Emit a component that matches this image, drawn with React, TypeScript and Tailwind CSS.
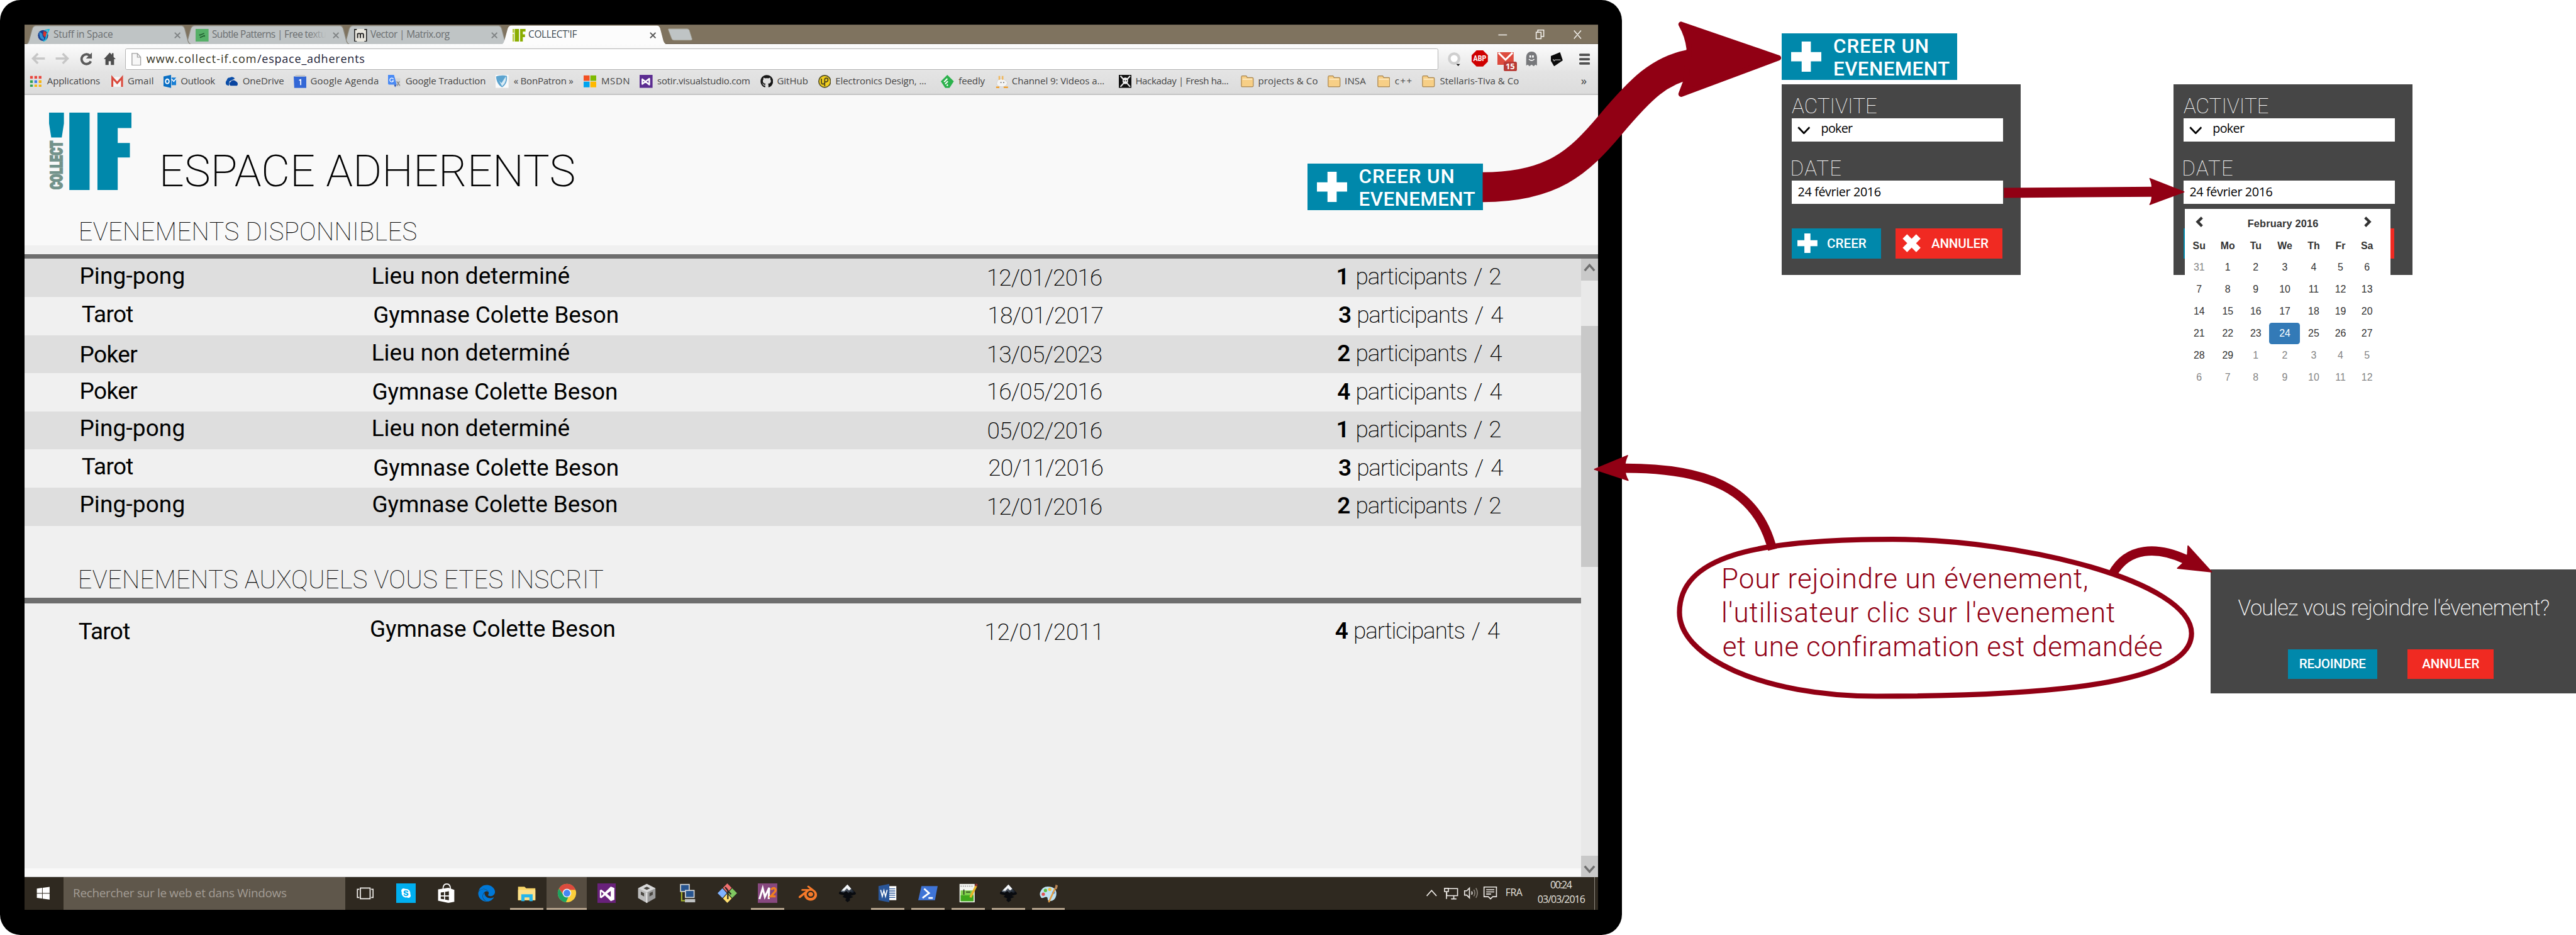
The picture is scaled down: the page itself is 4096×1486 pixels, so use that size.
import React, { useLayoutEffect, useRef, useState } from "react";
import { FaEdge, FaGithub, FaSkype, FaWindows } from "react-icons/fa";
import { DiVisualstudio } from "react-icons/di";
import { SiBlender } from "react-icons/si";

/* One line of text whose ink spans exactly `w` pixels; the tracking is measured at run time. */
function Fit({ w, className = "", children }: { w: number; className?: string; children: string }) {
  const ref = useRef<HTMLDivElement>(null);
  const [fit, setFit] = useState({ spacing: 0, shift: 0 });
  useLayoutEffect(() => {
    const ctx = document.createElement("canvas").getContext("2d");
    if (!ref.current || !ctx) return;
    const cs = getComputedStyle(ref.current);
    ctx.font = `${cs.fontWeight} ${cs.fontSize} ${cs.fontFamily}`;
    const m = ctx.measureText(children);
    const ink = m.actualBoundingBoxLeft + m.actualBoundingBoxRight;
    const n = children.length - 1;
    setFit({ spacing: n > 0 ? (w - ink) / n : 0, shift: m.actualBoundingBoxLeft });
  }, [w, children]);
  return (
    <div
      ref={ref}
      className={"shrink-0 whitespace-pre leading-none " + className}
      style={{ width: w, letterSpacing: fit.spacing, textIndent: fit.shift }}
    >
      {children}
    </div>
  );
}

/* ---------- browser chrome ---------- */

const ifGlyph = "M4 0h8v24H4zM14 0h10v5h-5v5h4v5h-4v9h-5z";

function TabIcon({ kind }: { kind: string }) {
  if (kind === "space")
    return (
      <svg viewBox="0 0 24 24" className="h-[24px] w-[24px]">
        <ellipse cx="11" cy="12" rx="9.500" ry="10" fill="#1c3f8f" />
        <path d="M4 6c4 0 6 3 6 6s4 4 3 8c-6 0-9-5-9-14z" fill="#2f8fd0" />
        <path d="M12 4c5 1 7 4 6 8l-4 3-3-4z" fill="#d8342b" />
        <path d="M14 3l8-2-4 9-2 10-5 3" fill="none" stroke="#23b6d8" strokeWidth="2.400" />
      </svg>
    );
  if (kind === "subtle")
    return (
      <svg viewBox="0 0 24 24" className="h-[24px] w-[24px]">
        <path d="M0 0h24v24H0z" fill="#56b068" />
        <path d="M7 12l9-4M8 16l9-4M7 12l1-2M17 12l-1 2" stroke="#1f5c2f" strokeWidth="1.800" fill="none" />
      </svg>
    );
  if (kind === "matrix")
    return (
      <svg viewBox="0 0 24 24" className="h-[24px] w-[24px]">
        <path d="M1 0h22v24H1z" fill="#e9e7de" />
        <path d="M5 1H1v22h4M19 1h4v22h-4" stroke="#222" strokeWidth="1.800" fill="none" />
        <path d="M6.500 17V8M6.500 10.500c0-3 5.200-3 5.200 0V17M11.700 10.500c0-3 5.600-3 5.600 0V17" stroke="#222" strokeWidth="2.200" fill="none" />
      </svg>
    );
  return (
    <svg viewBox="0 0 24 24" className="h-[24px] w-[24px]">
      <path d={ifGlyph} fill="#8aad00" />
      <path d="M0 0h3v7H0zM0 9h2.500v15H0z" fill="#b4c832" />
    </svg>
  );
}

function Tab({ kind, title, w, active, z }: { kind: string; title: string; w: number; active?: boolean; z: string }) {
  return (
    <div className={"relative -ml-[14px] flex h-[36px] w-[307px] shrink-0 items-start " + z}>
      <svg viewBox="0 0 307 36" className="absolute inset-0 h-[36px] w-[307px]">
        <path
          d="M0 36Q4 35 6 28L12 6Q14 1 19 1H288Q292 1 294 6L300 29Q302 35 307 36Z"
          fill={active ? "#fcfcfc" : "#bfc4c5"}
          stroke={active ? "none" : "#8b877b"}
          strokeWidth="1.500"
        />
      </svg>
      <div className="relative ml-[21px] mt-[7px]">
        <TabIcon kind={kind} />
      </div>
      <div className="relative ml-[6px] mt-[9px] w-[212px]">
        <Fit w={w} className={active ? "text-[18px] text-[#3c4a52]" : "text-[18px] text-[#6b6e70]"}>{title}</Fit>
        {w > 200 && <div className="absolute right-0 top-0 h-[22px] w-[34px] bg-linear-to-r from-transparent to-[#bfc4c5]" />}
      </div>
      <svg viewBox="0 0 12 12" className="relative ml-[11px] mt-[13px] h-[12px] w-[12px]">
        <path d="M1 1l10 10M11 1L1 11" stroke={active ? "#555" : "#7f8384"} strokeWidth="2.200" />
      </svg>
    </div>
  );
}

function TabStrip() {
  return (
    <div className="flex h-[37px] items-end bg-[#7f735f] pl-[17px] shadow-[inset_0_1px_0_#5d5345,inset_0_-1px_0_#5d5345]">
      <Tab kind="space" title="Stuff in Space" w={110} z="z-30" />
      <Tab kind="subtle" title="Subtle Patterns | Free textu" w={211} z="z-20" />
      <Tab kind="matrix" title="Vector | Matrix.org" w={147} z="z-10" />
      <Tab kind="if" title="COLLECT'IF" w={89} active z="z-40" />
      <svg viewBox="0 0 48 24" className="mb-[6px] h-[24px] w-[48px]">
        <path d="M3 1H37Q40 1 41 4L46 20Q46 22 44 22H12Q9 22 8 19L2 3Q1 1 3 1Z" fill="#bfc4c5" stroke="#9c9788" />
      </svg>
      <svg viewBox="0 0 160 20" className="mb-[9px] ml-auto mr-[28px] h-[20px] w-[160px]" fill="none" stroke="#f4f2ee" strokeWidth="1.800">
        <path d="M4 11h16M74 6h9v12h-9zM77 6V2h11v12h-4M144 3l13 15M157 3l-13 15" />
      </svg>
    </div>
  );
}

function Toolbar() {
  return (
    <div className="flex h-[48px] items-start bg-linear-to-b from-[#fcfcfc] to-[#e6e6e6]">
      <svg viewBox="0 0 160 30" className="ml-[12px] mt-[12px] h-[30px] w-[160px]" fill="none">
        <path d="M26 14H5M13 5L4 14l9 9" stroke="#c6c6c6" strokeWidth="4" />
        <path d="M46 14h21M59 5l9 9-9 9" stroke="#c6c6c6" strokeWidth="4" />
        <path d="M109 8.500A9 9 0 1 0 111 19" stroke="#5b5b5b" strokeWidth="4.400" />
        <path d="M113 3v11h-11z" fill="#5b5b5b" />
        <path d="M146 3l-11 12h3v11h6v-7h4v7h6V15h3l-4-4V4h-3v3z" fill="#4e4e4e" />
      </svg>
      <div className="ml-[14.500px] mt-[7px] flex h-[40px] w-[2428px] items-start rounded-[3px] border-[1.500px] border-[#b4b4b4] bg-white">
        <svg viewBox="0 0 18 24" className="ml-[11px] mt-[7px] h-[24px] w-[18px]">
          <path d="M1 1h10l6 7v15H1zM11 1v7h6" fill="#f7f7f7" stroke="#a2a2a2" strokeWidth="1.600" />
        </svg>
        <Fit w={202} className="ml-[9px] mt-[7.500px] text-[21px] text-[#333322]">www.collect-if.com</Fit>
        <Fit w={199} className="ml-[3px] mt-[7.500px] text-[21px] text-[#1b1b35]">/espace_adherents</Fit>
      </div>
      <svg viewBox="0 0 26 30" className="ml-[17px] mt-[12px] h-[30px] w-[26px]">
        <circle cx="13" cy="14" r="9" fill="#fff" stroke="#cfcfcf" strokeWidth="5" />
        <path d="M17 24h7l-3.500 4z" fill="#111" />
      </svg>
      <svg viewBox="0 0 30 30" className="ml-[19px] mt-[11px] h-[30px] w-[30px]">
        <path d="M9 0h12l9 9v12l-9 9H9l-9-9V9z" fill="#cf0000" />
        <text x="15" y="20" textAnchor="middle" textLength="24" lengthAdjust="spacingAndGlyphs" fill="#fff" fontSize="14" fontWeight="700" fontFamily="Roboto">ABP</text>
      </svg>
      <div className="relative ml-[18px] mt-[14px]">
        <svg viewBox="0 0 30 24" className="h-[24px] w-[30px]">
          <path d="M0 0h30v24H0z" fill="#dd4b3e" />
          <path d="M2 1l13 13L28 1" fill="none" stroke="#fff" strokeWidth="3.400" />
        </svg>
        <div className="absolute left-[11px] top-[18px] flex h-[17px] w-[25px] items-center justify-center rounded-[3px] bg-[#b83b36] text-[15px] font-bold leading-none text-white">15</div>
      </div>
      <svg viewBox="0 0 24 28" className="ml-[21px] mt-[13px] h-[28px] w-[24px]">
        <path d="M2 26V10Q3 0 12 0t10 10v16l-3-2-3 3-4-3-4 3-3-3z" fill="#77787b" />
        <path d="M8 7h3v4H8zM13 7h3v4h-3z" fill="#fff" />
        <path d="M7 14q5 5 10 0" fill="none" stroke="#fff" strokeWidth="1.800" />
      </svg>
      <svg viewBox="0 0 22 26" className="ml-[24px] mt-[14px] h-[26px] w-[22px]">
        <path d="M0 7L17 0l5 15L6 26 0 16z" fill="#0b0b0b" />
        <path d="M4 13l2 3 2-2h10" stroke="#bbb" strokeWidth="1.400" fill="none" />
      </svg>
      <svg viewBox="0 0 20 22" className="ml-[30px] mt-[17px] h-[22px] w-[20px]" stroke="#505050" strokeWidth="4.400" strokeLinecap="round">
        <path d="M2 2.500h16M2 10.500h16M2 18.500h16" />
      </svg>
    </div>
  );
}

const bookmarks: { label: string; icon: string; x: number; gap: number; w: number }[] = [
  { label: "Applications", icon: "apps", x: 55, gap: 32, w: 98 },
  { label: "Gmail", icon: "gmail", x: 205, gap: 32, w: 46 },
  { label: "Outlook", icon: "outlook", x: 302, gap: 33, w: 64 },
  { label: "OneDrive", icon: "onedrive", x: 417, gap: 32.6, w: 75 },
  { label: "Google Agenda", icon: "agenda", x: 543, gap: 32, w: 125 },
  { label: "Google Traduction", icon: "trad", x: 718, gap: 33, w: 147 },
  { label: "« BonPatron »", icon: "bon", x: 917, gap: 33, w: 110 },
  { label: "MSDN", icon: "msdn", x: 1079, gap: 34, w: 51 },
  { label: "sotir.visualstudio.com", icon: "vs", x: 1183, gap: 32.6, w: 171 },
  { label: "GitHub", icon: "github", x: 1406, gap: 32, w: 56 },
  { label: "Electronics Design, ...", icon: "elec", x: 1513, gap: 33, w: 167 },
  { label: "feedly", icon: "feedly", x: 1740, gap: 33, w: 49 },
  { label: "Channel 9: Videos a...", icon: "ch9", x: 1841, gap: 31.4, w: 170 },
  { label: "Hackaday | Fresh ha...", icon: "hack", x: 2069, gap: 32, w: 171 },
  { label: "projects & Co", icon: "folder", x: 2295, gap: 33, w: 109 },
  { label: "INSA", icon: "folder", x: 2456, gap: 32, w: 39 },
  { label: "c++", icon: "folder", x: 2547, gap: 32.5, w: 32 },
  { label: "Stellaris-Tiva & Co", icon: "folder", x: 2630.5, gap: 32.5, w: 146 },
];

function BookmarkIcon({ icon }: { icon: string }) {
  if (icon === "github") return <FaGithub className="h-[24px] w-[24px] text-[#161616]" />;
  const art: Record<string, React.ReactNode> = {
    apps: (
      <>
        <path d="M1 2h5v5H1zM9 2h5v5H9zM17 2h5v5h-5z" fill="#e8453c" />
        <path d="M1 10h5v5H1z" fill="#2fa14f" />
        <path d="M9 10h5v5H9z" fill="#3f7ee8" />
        <path d="M17 10h5v5h-5zM9 18h5v4H9zM17 18h5v4h-5z" fill="#f6b40e" />
        <path d="M1 18h5v4H1z" fill="#2fa14f" />
      </>
    ),
    gmail: (
      <>
        <path d="M1 4h22v18H1z" fill="#f6f6f6" />
        <path d="M3 22V5l9 10 9-10v17" fill="none" stroke="#d94a3d" strokeWidth="3.600" />
      </>
    ),
    outlook: (
      <>
        <path d="M0 3L14 0v24L0 21z" fill="#0a6fc4" />
        <path d="M15 5h9v14h-9z" fill="#1a7fd4" />
        <path d="M15 8l4 4 5-6" stroke="#fff" strokeWidth="1.800" fill="none" />
        <ellipse cx="7" cy="12" rx="3.300" ry="4.200" fill="none" stroke="#fff" strokeWidth="2.200" />
      </>
    ),
    onedrive: (
      <>
        <path d="M3 19a6 6 0 0 1 0-9 6 6 0 0 1 6-5 7 7 0 0 1 9 2L8 12l-1 8z" fill="#0b4ea8" />
        <path d="M10 20a4 4 0 0 1 0-7 6 6 0 0 1 10-1 5 5 0 0 1 2 8z" fill="#0a45a0" />
      </>
    ),
    agenda: (
      <>
        <path d="M0 3h24v21H1z" fill="#3367d6" />
        <path d="M3 0h18v3H3z" fill="#c9c9c9" />
        <path d="M10 10l3-1v10" stroke="#fff" strokeWidth="2" fill="none" />
      </>
    ),
    trad: (
      <>
        <path d="M9 6h14v17H13z" fill="#d7d7d7" />
        <path d="M0 0h11l5 18H2Q0 18 0 16z" fill="#4a8af4" />
        <path d="M11 18h5l-3 5z" fill="#2d58b8" />
        <path d="M10 8a3.500 3.500 0 1 0 0 3H7.500" stroke="#fff" strokeWidth="1.500" fill="none" />
        <path d="M16 12l6 8M21 12l-4 8" stroke="#777" strokeWidth="1.400" />
      </>
    ),
    bon: (
      <>
        <path d="M0 0h24v24H0z" fill="#fafafa" />
        <path d="M1 3c5-2 14-3 20-1 1 9-2 17-9 21C6 20 1 12 1 3z" fill="#5ba3cf" />
        <path d="M3 4c3 6 5 9 8 11L19 3c1 8-2 14-7 18" fill="#d9ecf6" />
      </>
    ),
    msdn: (
      <>
        <path d="M0 1h11v10H0z" fill="#f25022" />
        <path d="M12.500 1H24v10H12.500z" fill="#7fba00" />
        <path d="M0 12.500h11V23H0z" fill="#00a4ef" />
        <path d="M12.500 12.500H24V23H12.500z" fill="#ffb900" />
      </>
    ),
    vs: (
      <>
        <path d="M0 0h24v24H0z" fill="#5c2d91" />
        <path d="M5 8v9l13-10v11L5 8z" fill="none" stroke="#fff" strokeWidth="2.800" strokeLinejoin="round" />
      </>
    ),
    elec: (
      <>
        <circle cx="12" cy="12" r="11" fill="#f2cf1d" stroke="#55502a" strokeWidth="2" />
        <path d="M6 7v7q0 3 3 3t3-3V9q0-3 3-3t3 3-3 4h-3M12 13v8" fill="none" stroke="#4b4520" strokeWidth="2" />
      </>
    ),
    feedly: (
      <>
        <path d="M12 0l12 12-8 12H8L0 12z" fill="#2bb24c" />
        <path d="M6 13l6-6M8 17l5-5M11 20l2-2" stroke="#fff" strokeWidth="2.400" />
      </>
    ),
    ch9: (
      <>
        <path d="M4 10q8-6 14 0l4 4q-1 8-10 8T2 16z" fill="#f4f4f4" stroke="#cfcfcf" />
        <path d="M7 2v7M13 2v7" stroke="#f0b860" strokeWidth="3" />
        <path d="M14 13h2v2h-2zM9 13h2v2H9z" fill="#777" />
        <path d="M1 23h6M15 23h8" stroke="#f0a030" strokeWidth="3" />
      </>
    ),
    hack: (
      <>
        <path d="M0 0h24v24H0z" fill="#111" />
        <path d="M3 2l18 20M21 2L3 22" stroke="#eee" strokeWidth="2.400" />
        <path d="M7 7q5-4 10 0v6l-3 4h-4l-3-4z" fill="#f4f4f4" />
        <path d="M9 10h2v2H9zM13 10h2v2h-2z" fill="#111" />
      </>
    ),
    folder: (
      <>
        <path d="M1 4q0-2 2-2h7l2 3h9q2 0 2 2v13q0 2-2 2H3q-2 0-2-2z" fill="#f7cf86" stroke="#a9854c" strokeWidth="1.400" />
        <path d="M3 8h18" stroke="#fdebc4" strokeWidth="2" />
      </>
    ),
  };
  return (
    <svg viewBox="0 0 24 24" className="h-[24px] w-[24px] shrink-0">
      {art[icon]}
    </svg>
  );
}

function Bookmarks() {
  return (
    <div className="flex h-[46px] items-start border-b-[3px] border-[#c4c4c4] bg-linear-to-b from-[#e4e4e4] to-[#dcdcdc] pl-[10px] text-[17.500px] text-[#454545]">
      {bookmarks.map((b, i) => (
        <div
          key={b.label}
          className="flex shrink-0 items-start pt-[9px]"
          style={{ width: (bookmarks[i + 1]?.x ?? 2924) - b.x }}
        >
          <BookmarkIcon icon={b.icon} />
          <div className="mt-[2px] flex" style={{ marginLeft: b.gap - 24 }}>
            <Fit w={b.w}>{b.label}</Fit>
          </div>
        </div>
      ))}
      <div className="pt-[8px] text-[22px] leading-none">»</div>
    </div>
  );
}

/* ---------- web page ---------- */

function Plus({ className }: { className: string }) {
  return (
    <svg viewBox="0 0 56 56" preserveAspectRatio="none" className={className}>
      <path d="M19.500 0h17v19.500H56v17H36.500V56h-17V36.500H0v-17h19.500z" fill="#fff" />
    </svg>
  );
}

function CreateEventButton() {
  return (
    <div className="flex h-[86px] w-[324px] items-start bg-[#0088ab] font-['Roboto',sans-serif] text-[36.500px] font-medium text-white">
      <Plus className="ml-[17px] mt-[15px] h-[56px] w-[56px]" />
      <div className="ml-[23px] mt-[5.500px]">
        <Fit w={174}>CREER UN</Fit>
        <Fit w={213} className="ml-[1px] mt-[5.500px]">EVENEMENT</Fit>
      </div>
    </div>
  );
}

type EventRow = {
  name: [string, number, number];
  place: [string, number, number];
  date: [string, number];
  seats: [string, string, number];
  shift: number;
};

const LIEU = "Lieu non determiné";
const GYM = "Gymnase Colette Beson";

const available: EventRow[] = [
  { name: ["Ping-pong", 190, 10.8], place: [LIEU, 363, 10.8], date: ["12/01/2016", 14.8], seats: ["1", "2", 12.8], shift: 0 },
  { name: ["Tarot", 94, 12], place: [GYM, 450, 13.3], date: ["18/01/2017", 13.9], seats: ["3", "4", 13], shift: 2 },
  { name: ["Poker", 104, 15.8], place: [LIEU, 363, 11.8], date: ["13/05/2023", 15.8], seats: ["2", "4", 12.8], shift: 0 },
  { name: ["Poker", 104, 12.1], place: [GYM, 450, 13.3], date: ["16/05/2016", 13.3], seats: ["4", "4", 13.3], shift: 0 },
  { name: ["Ping-pong", 190, 10.8], place: [LIEU, 363, 10.8], date: ["05/02/2016", 14.8], seats: ["1", "2", 12.8], shift: 0 },
  { name: ["Tarot", 94, 11.3], place: [GYM, 450, 13.3], date: ["20/11/2016", 13.3], seats: ["3", "4", 13.3], shift: 2 },
  { name: ["Ping-pong", 190, 10.8], place: [GYM, 450, 10.8], date: ["12/01/2016", 15.3], seats: ["2", "2", 13.3], shift: 0 },
];

const joined: EventRow = {
  name: ["Tarot", 94, 32.3],
  place: [GYM, 450, 27.3],
  date: ["12/01/2011", 33.3],
  seats: ["4", "4", 30.3],
  shift: -4,
};

function Row({ row, className }: { row: EventRow; className: string }) {
  return (
    <div className={"grid grid-cols-[540px_1137.500px_646.500px_36px_300px] font-['Roboto',sans-serif] text-[43px] text-black " + className} style={{ paddingLeft: 105 + row.shift }}>
      <div style={{ paddingTop: row.name[2] }}><Fit w={row.name[1]}>{row.name[0]}</Fit></div>
      <div style={{ paddingTop: row.place[2] }}><Fit w={row.place[1]}>{row.place[0]}</Fit></div>
      <div style={{ paddingTop: row.date[1] }}><Fit w={210} className="font-extralight">{row.date[0]}</Fit></div>
      <div style={{ paddingTop: row.seats[2] }}><Fit w={20} className="font-semibold">{row.seats[0]}</Fit></div>
      <div className="flex font-extralight" style={{ paddingTop: row.seats[2] }}>
        <Fit w={201.5}>participants</Fit>
        <Fit w={17} className="ml-[14px]">/</Fit>
        <Fit w={20} className="ml-[13px]">{row.seats[1]}</Fit>
      </div>
    </div>
  );
}

function Logo() {
  return (
    <svg viewBox="0 0 153 143" className="ml-[45.500px] mt-[32px] h-[143px] w-[153px] shrink-0">
      <path d="M0 0H27.500V20L23.500 46H4L0 20ZM37.500 0H75V143H37.500ZM89.500 0H152.500V28.500H127V56H149.500V83H127V143H89.500Z" fill="#0088ab" />
      <text transform="translate(25 142) rotate(-90)" textLength="90" lengthAdjust="spacingAndGlyphs" fill="#73938b" stroke="#73938b" strokeWidth="2.400" fontFamily="Roboto" fontWeight="900" fontSize="30">COLLECT</text>
    </svg>
  );
}

function Chevron({ up }: { up?: boolean }) {
  return (
    <svg viewBox="0 0 22 16" className="h-[16px] w-[22px]">
      <path d={up ? "M2 14l9-10 9 10" : "M2 2l9 10 9-10"} fill="none" stroke="#6e6e6e" strokeWidth="4" />
    </svg>
  );
}

function Page() {
  return (
    <div className="flex h-[1445px] flex-col bg-[#f0f0f0]">
      <div className="h-[278px] bg-[#f9f9f9] font-['Roboto',sans-serif] text-black">
        <div className="flex h-[230.500px] items-start">
          <Logo />
          <Fit w={761} className="ml-[57.500px] mt-[99.500px] text-[82px] font-extralight">ESPACE ADHERENTS</Fit>
          <div className="ml-auto mr-[213px] mt-[126.700px]"><CreateEventButton /></div>
        </div>
        <Fit w={621} className="ml-[104px] text-[46.500px] font-thin">EVENEMENTS DISPONNIBLES</Fit>
      </div>
      <div className="mt-[15.500px] h-[9px] shrink-0 bg-[#6e6e6e]" />
      <div className="flex grow">
        <div className="flex w-[2879px] flex-col">
          {available.map((row, i) => (
            <Row key={i} row={row} className={i % 2 ? "h-[70.500px] bg-[#f0f0f0]" : "h-[70.500px] bg-[#dedede]"} />
          ))}
          <Fit w={968} className="ml-[103px] mt-[77.600px] font-['Roboto',sans-serif] text-[46.500px] font-thin text-black">EVENEMENTS AUXQUELS VOUS ETES INSCRIT</Fit>
          <div className="mt-[9.500px] h-[9.500px] shrink-0 bg-[#6e6e6e]" />
          <Row row={joined} className="h-[120px]" />
          <div className="mt-auto h-[16px] border-b-[2px] border-[#cfcfcf] bg-[#f9f9f9]" />
        </div>
        <div className="flex w-[31px] flex-col items-center bg-[#e9e9e9]">
          <div className="flex h-[40px] w-full items-center justify-center bg-[#c9c9c9] pb-[8px]"><Chevron up /></div>
          <div className="mt-[84px] h-[446px] w-full bg-[#c9c9c9]" />
          <div className="mt-auto flex h-[39px] w-full items-center justify-center bg-[#c9c9c9] pt-[12px]"><Chevron /></div>
        </div>
      </div>
    </div>
  );
}

/* ---------- taskbar ---------- */

const apps: { id: string; open?: boolean; active?: boolean }[] = [
  { id: "skype" }, { id: "store" }, { id: "edge" }, { id: "explorer", open: true }, { id: "chrome", active: true },
  { id: "vs" }, { id: "cube" }, { id: "pcs" }, { id: "git" }, { id: "m2", open: true }, { id: "blender" },
  { id: "inkscape" }, { id: "word", open: true }, { id: "ps", open: true }, { id: "notepad", open: true },
  { id: "inkscape", open: true }, { id: "paint", open: true },
];

function AppIcon({ id }: { id: string }) {
  if (id === "skype")
    return <div className="flex h-[36px] w-[36px] items-center justify-center bg-[#00aff0]"><FaSkype className="h-[20px] w-[20px] text-white" /></div>;
  if (id === "edge") return <FaEdge className="h-[32px] w-[32px] text-[#0078d7]" />;
  if (id === "blender") return <SiBlender className="h-[34px] w-[36px] text-[#f5792a]" />;
  if (id === "vs") return <div className="flex h-[36px] w-[34px] items-center justify-center bg-[#68217a]"><DiVisualstudio className="h-[38px] w-[38px] shrink-0 text-white" /></div>;
  const art: Record<string, React.ReactNode> = {
    inkscape: (
      <>
        <defs>
          <linearGradient id="ink" x1="0" y1="0" x2="1" y2="1">
            <stop offset="0" stopColor="#fff" />
            <stop offset="0.450" stopColor="#5c6673" />
            <stop offset="1" stopColor="#0a0f18" />
          </linearGradient>
        </defs>
        <path d="M18 2L33 17Q35 20 31 21L24 23 29 25 22 28 23 31 18 35 14 31 16 28 9 25 12 22 4 20Q1 19 3 16Z" fill="#090b0f" />
        <path d="M18 2L31 16 27 18 23 15 20 18 16 14 11 17 5 15Z" fill="url(#ink)" />
        <path d="M18 2l7 8-4 3-4-4-5 5-5-1z" fill="#f4f6f8" />
      </>
    ),
    store: (
      <>
        <path d="M12 11q0-10 7-10t7 10" fill="none" stroke="#fff" strokeWidth="2" />
        <path d="M3 11l19-3v28L3 32z" fill="#fff" />
        <path d="M22 8l11 4v22l-11 2z" fill="#fff" />
        <path d="M8 17l6-1v6H8zM16 15.600l7-1V22h-7zM8 24h6v5.500l-6-1zM16 24h7v7l-7-1z" fill="#2f2920" />
      </>
    ),
    explorer: (
      <>
        <path d="M2 6h12l3 3h17v22H2z" fill="#f8d568" />
        <path d="M2 12h32v19H2z" fill="#fce08a" />
        <path d="M8 33V20h21v13h-6v-7h-9v7z" fill="#26b5ea" />
      </>
    ),
    chrome: (
      <>
        <circle cx="18" cy="18" r="17" fill="#fbcf3b" />
        <path d="M3.300 9.500A17 17 0 0 1 34 12H18a7 7 0 0 0-6 9z" fill="#dd4b3e" />
        <path d="M3.300 9.500L12 22a7 7 0 0 0 9 2l-5 11A17 17 0 0 1 3.300 9.500z" fill="#1da261" />
        <circle cx="18" cy="18" r="8" fill="#f5f5f5" />
        <circle cx="18" cy="18" r="6.300" fill="#4587f3" />
      </>
    ),
    cube: (
      <>
        <path d="M18 1l16 8v18l-16 9L2 27V9z" fill="#9b9b9b" />
        <path d="M18 1l16 8-16 8L2 9z" fill="#d8d8d8" />
        <path d="M2 9l16 8v19L2 27z" fill="#bcbcbc" />
        <path d="M12 9l6-3 6 3-6 3zM7 15l6 3v6l-6-3zM29 15l-6 3v6l6-3z" fill="#4a4742" />
        <path d="M18 17v19" stroke="#eee" strokeWidth="2" />
      </>
    ),
    pcs: (
      <>
        <path d="M5 1h18v15H5z" fill="#cfd3d6" />
        <path d="M7 3h14v11H7z" fill="#27548f" />
        <path d="M14 12h18v15H14z" fill="#cfd3d6" />
        <path d="M16 14h14v11H16z" fill="#27548f" />
        <path d="M14 29h19v6H14z" fill="#bfc2c3" />
        <path d="M8 16v16h6" stroke="#a6b82a" strokeWidth="2.400" fill="none" />
      </>
    ),
    git: (
      <>
        <path d="M18 0l8 8-8 9-8-9z" fill="#f07070" />
        <path d="M9 9l8 9-8 9-9-9z" fill="#80b3ff" />
        <path d="M27 9l9 9-9 9-8-9z" fill="#80c860" />
        <path d="M18 19l8 9-8 8-8-8z" fill="#ffe070" />
        <path d="M14 7l5 6v16M19 14l6 6" stroke="#2a2622" strokeWidth="2.600" fill="none" />
      </>
    ),
    m2: (
      <>
        <path d="M0 0h36v36H0z" fill="#87487f" />
        <path d="M3 29L9 9l4 16 8-17-1 21" fill="none" stroke="#fff" strokeWidth="3.600" />
        <path d="M25 12q2-4 6-3 3 2 1 6l-8 9h9" fill="none" stroke="#f08020" strokeWidth="4" />
      </>
    ),
    word: (
      <>
        <path d="M18 5h16v26H18z" fill="#fff" />
        <path d="M20 10h12M20 14h12M20 18h12M20 22h12M20 26h12" stroke="#2b5797" strokeWidth="1.600" />
        <path d="M1 5L21 1v34L1 31z" fill="#2a5699" />
        <path d="M5 12l3 12 3-11 3 11 3-12" fill="none" stroke="#fff" strokeWidth="2" />
      </>
    ),
    ps: (
      <>
        <path d="M6 5h30l-5 26H0z" fill="#3f74d6" />
        <path d="M11 10l9 8-12 9M19 27h8" fill="none" stroke="#fff" strokeWidth="3.200" />
      </>
    ),
    notepad: (
      <>
        <path d="M2 1h28v34H2z" fill="#f4f6f2" />
        <path d="M4 13h24v20H4z" fill="#7fcf4c" />
        <path d="M4 22h24v11H4z" fill="#3fa81c" />
        <path d="M4 5h24" stroke="#999" strokeWidth="2" strokeDasharray="2 2" />
        <path d="M10 11v10M14 16h8" stroke="#26331c" strokeWidth="1.800" />
        <path d="M22 26L33 4" stroke="#e8b52a" strokeWidth="4" />
        <path d="M32 5l2-4" stroke="#8a3030" strokeWidth="4" />
      </>
    ),
    paint: (
      <>
        <path d="M2 17Q6 4 20 6q14 2 12 16-2 10-12 11-4 0-4-5t-6-2-7-2q-2-2-1-7z" fill="#bfe1f0" />
        <circle cx="8" cy="20" r="3" fill="#e05050" />
        <circle cx="12" cy="13" r="3" fill="#5cc040" />
        <circle cx="20" cy="11" r="3" fill="#f0c040" />
        <circle cx="27" cy="17" r="2.600" fill="#4a80e0" />
        <path d="M18 35L30 9" stroke="#e09a40" strokeWidth="3" />
        <path d="M29 10l2-8 4 2-2 7z" fill="#b98455" />
      </>
    ),
  };
  return <svg viewBox="0 0 36 36" className="h-[36px] w-[36px]">{art[id]}</svg>;
}

function Taskbar() {
  return (
    <div className="flex h-[61px] items-stretch bg-[#2f2920] text-[#e6e3df]">
      <div className="flex w-[72px] items-center pl-[23px]"><FaWindows className="h-[27px] w-[25px] text-white" /></div>
      <div className="w-[521px] bg-[#5f574b] pl-[20px] pt-[19.500px] text-[22px] text-[#a39d95]">
        <Fit w={393}>Rechercher sur le web et dans Windows</Fit>
      </div>
      <svg viewBox="0 0 32 24" className="ml-[21px] mt-[19px] h-[24px] w-[32px]" fill="none" stroke="#f2f0ec" strokeWidth="2">
        <path d="M7 1.500h18v20H7zM5 4H1.500v15H5M27 4h3.500v15H27" />
      </svg>
      <div className="ml-[23px] flex">
        {apps.map((a, i) => (
          <div key={i} className={"relative flex w-[74.250px] items-center justify-center " + (a.active ? "bg-[#564d41]" : "")}>
            <AppIcon id={a.id} />
            {(a.open || a.active) && (
              <div className={"absolute bottom-0 h-[4px] bg-[#b8a68f] " + (a.active ? "inset-x-0" : "inset-x-[6.500px]")} />
            )}
          </div>
        ))}
      </div>
      <div className="ml-auto flex items-start">
        <svg viewBox="0 0 134 26" className="mt-[17px] h-[26px] w-[134px]" fill="none" stroke="#efece8" strokeWidth="1.900">
          <path d="M3 18.500l9-10 9 10" />
          <path d="M43 5h17v13H40V12M36 4.500h7v6h-7zM39.500 10v14M48 24h10M53 18v6" />
          <path d="M73 9h4l5-5v18l-5-5h-4zM86 10q2 3 0 6" />
          <path d="M90 7q4 6 0 12M94 4q5.500 9 0 18" stroke="#8d877e" />
          <path d="M109 2h23v18h-7l-4 4-4-4h-8zM113 7h15M113 11h15M113 15h9" />
        </svg>
        <Fit w={31} className="ml-[16px] mt-[20.500px] text-[18.500px]">FRA</Fit>
        <div className="ml-[27.500px] flex w-[88px] flex-col items-center pt-[6.500px] text-[18.500px]">
          <Fit w={41}>00:24</Fit>
          <Fit w={88} className="mt-[7.500px]">03/03/2016</Fit>
        </div>
        <div className="ml-[17px] mr-[5px] h-[61px] w-[1.500px] bg-[#8d877e]" />
      </div>
    </div>
  );
}

/* ---------- dialogs on the right ---------- */

function CreateCard({ covered }: { covered?: boolean }) {
  return (
    <div className="h-[353px] w-[441.500px] bg-[#464646] pl-[18.500px] font-['Roboto',sans-serif]">
      <Fit w={157} className="pt-[21.500px] text-[38.500px] font-thin text-white">ACTIVITE</Fit>
      <div className="mt-[3px] flex h-[43.500px] w-[391px] items-start bg-white font-['Open_Sans',sans-serif] text-[23px] text-black">
        <svg viewBox="0 0 24 14" className="ml-[10px] mt-[16px] h-[14px] w-[24px]">
          <path d="M1.500 1.500L12 12.500 22.500 1.500" fill="none" stroke="#000" strokeWidth="3.200" />
        </svg>
        <Fit w={58.5} className="ml-[21px] mt-[7px]">poker</Fit>
      </div>
      <Fit w={91} className="mt-[30px] text-[38.500px] font-thin text-white">DATE</Fit>
      <div className="mt-[3.500px] flex h-[43.500px] w-[391px] items-start bg-white font-['Open_Sans',sans-serif] text-[23px] text-black">
        <Fit w={153} className="ml-[12px] mt-[9px]">24 février 2016</Fit>
      </div>
      <div className="mt-[44.500px] flex text-[24px] font-medium text-white">
        <div className="flex h-[56px] w-[165px] bg-[#0088ab]">
          {!covered && <Plus className="ml-[10px] mt-[10px] h-[36px] w-[37px]" />}
          {!covered && <Fit w={72} className="ml-[19px] mt-[17px]">CREER</Fit>}
        </div>
        <div className="ml-[27px] flex h-[56px] w-[198px] bg-[#f02a22]">
          {!covered && (
            <svg viewBox="0 0 34 34" className="ml-[13px] mt-[11px] h-[34px] w-[34px]">
              <path d="M4.500 4.500l25 25M29.500 4.500l-25 25" stroke="#fff" strokeWidth="11.500" />
            </svg>
          )}
          {!covered && <Fit w={106} className="ml-[19px] mt-[17px]">ANNULER</Fit>}
        </div>
      </div>
    </div>
  );
}

const weeks = [
  [31, 1, 2, 3, 4, 5, 6],
  [7, 8, 9, 10, 11, 12, 13],
  [14, 15, 16, 17, 18, 19, 20],
  [21, 22, 23, 24, 25, 26, 27],
  [28, 29, 1, 2, 3, 4, 5],
  [6, 7, 8, 9, 10, 11, 12],
];

function Calendar() {
  return (
    <div className="h-[336px] w-[380.500px] bg-white font-['Liberation_Sans',Arial,sans-serif] text-[18.500px] text-[#333]">
      <div className="flex h-[47.500px] items-start">
        <svg viewBox="0 0 14 20" className="ml-[20px] mt-[14px] h-[20px] w-[14px]"><path d="M12 2L4 10l8 8" fill="none" stroke="#333" strokeWidth="5" /></svg>
        <Fit w={129.5} className="ml-[83px] mt-[16.500px] text-[19px] font-bold">February 2016</Fit>
        <svg viewBox="0 0 14 20" className="ml-[85.500px] mt-[14px] h-[20px] w-[14px]"><path d="M2 2l8 8-8 8" fill="none" stroke="#333" strokeWidth="5" /></svg>
      </div>
      <div className="grid auto-rows-[40.500px] grid-cols-[53px_53px_50.500px_57px_50px_49px_49px] items-center justify-items-center">
        {["Su", "Mo", "Tu", "We", "Th", "Fr", "Sa"].map((d) => (
          <div key={d} className="text-[18.500px] font-bold leading-none">{d}</div>
        ))}
        {weeks.map((week, r) =>
          week.map((d, c) => {
            const other = (r === 0 && d > 7) || (r > 3 && d < 15);
            const picked = r === 3 && d === 24;
            return (
              <div
                key={r + "-" + c}
                className={
                  "flex h-[40px] w-full items-center justify-center leading-none " +
                  (picked ? "rounded-[5px] bg-[#337ab7] text-white" : other ? "text-[#858585]" : "")
                }
              >
                {d}
              </div>
            );
          })
        )}
      </div>
    </div>
  );
}

function ConfirmCard() {
  return (
    <div className="h-[229px] w-[676px] bg-[#464646] font-['Roboto',sans-serif] text-white">
      <Fit w={575} className="ml-[50.500px] pt-[50.500px] text-[40px] font-extralight">Voulez vous rejoindre l'évenement?</Fit>
      <div className="ml-[142.500px] mt-[56.500px] flex text-[24px] font-medium">
        <div className="h-[55px] w-[165.500px] bg-[#0088ab] pl-[22px] pt-[16px]"><Fit w={122}>REJOINDRE</Fit></div>
        <div className="ml-[56px] h-[55px] w-[159px] bg-[#f02a22] pl-[27px] pt-[16px]"><Fit w={106}>ANNULER</Fit></div>
      </div>
    </div>
  );
}

function Annotations() {
  return (
    <svg viewBox="0 0 4764 1728" className="absolute left-0 top-0 h-[1728px] w-[4764px]" fill="none" stroke="#910014">
      <path d="M2742 346C2870 346 2920 300 2978 231C3036 162 3070 130 3125 119" strokeWidth="55" />
      <path d="M3109 45L3289 107L3109 174L3118 150L3124 90Q3121 66 3109 45Z" fill="#910014" strokeWidth="10" strokeLinejoin="round" />
      <path d="M3706 356.500L3982 354.500" strokeWidth="18.500" />
      <path d="M3976 330L4039 354.700L3976 378Q3981 370 3980 354Q3981 340 3976 330Z" fill="#910014" strokeWidth="2" strokeLinejoin="round" />
      <path d="M3004 865.500C3160 865 3250 905 3278 1016" strokeWidth="17" />
      <path d="M2949 867.500L3010 842Q3004 855 3005 866Q3005 878 3011 888Z" fill="#910014" strokeWidth="2" strokeLinejoin="round" />
      <path d="M3907 1061C3935 1010 3990 1010 4042 1034" strokeWidth="17" />
      <path d="M4046.500 1009L4090 1057L4027 1050.500L4037 1041L4045.500 1025Z" fill="#910014" strokeWidth="2" strokeLinejoin="round" />
      <path d="M3106 1132C3106 1030 3240 997 3500 997C3740 997 4053 1075 4053 1171C4053 1255 3840 1287 3470 1287C3260 1287 3106 1215 3106 1132Z" strokeWidth="9.500" />
    </svg>
  );
}

export default function App() {
  return (
    <div className="h-[1486px] w-[4096px] overflow-hidden bg-white">
      <div className="relative h-[1728px] w-[4764px] bg-white font-['Open_Sans',sans-serif] [zoom:0.85978]">
        <div className="h-[1728px] w-[3000px] rounded-[38px] bg-black pl-[45px] pt-[45px]">
          <div className="flex w-[2910px] flex-col">
            <TabStrip />
            <Toolbar />
            <Bookmarks />
            <Page />
            <Taskbar />
          </div>
        </div>
        <div className="absolute left-[3295.500px] top-[61.500px]"><CreateEventButton /></div>
        <div className="absolute left-[3295.300px] top-[155.300px]"><CreateCard /></div>
        <div className="absolute left-[4019.700px] top-[155.300px]"><CreateCard covered /></div>
        <div className="absolute left-[4040.500px] top-[386.600px]"><Calendar /></div>
        <div className="absolute left-[4088.500px] top-[1053px]"><ConfirmCard /></div>
        <Annotations />
        <div className="absolute left-[3187.500px] top-[1045.500px] flex flex-col gap-[11.700px] font-['Roboto',sans-serif] text-[51px] font-light text-[#910014]">
          <Fit w={672}>Pour rejoindre un évenement,</Fit>
          <Fit w={723}>l'utilisateur clic sur l'evenement</Fit>
          <Fit w={810}>et une confiramation est demandée</Fit>
        </div>
      </div>
    </div>
  );
}
